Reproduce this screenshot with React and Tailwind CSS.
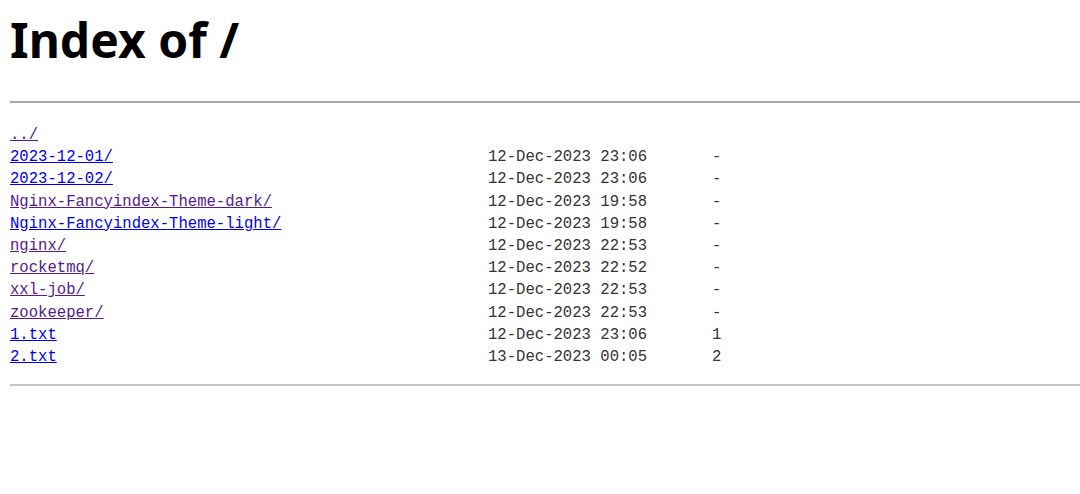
const entries = [
    { name: '../',                             date: '',                  size: '',  visited: true },
    { name: '2023-12-01/',                     date: '12-Dec-2023 23:06', size: '-', visited: false },
    { name: '2023-12-02/',                     date: '12-Dec-2023 23:06', size: '-', visited: false },
    { name: 'Nginx-Fancyindex-Theme-dark/',    date: '12-Dec-2023 19:58', size: '-', visited: true },
    { name: 'Nginx-Fancyindex-Theme-light/',   date: '12-Dec-2023 19:58', size: '-', visited: false },
    { name: 'nginx/',                          date: '12-Dec-2023 22:53', size: '-', visited: true },
    { name: 'rocketmq/',                       date: '12-Dec-2023 22:52', size: '-', visited: true },
    { name: 'xxl-job/',                        date: '12-Dec-2023 22:53', size: '-', visited: true },
    { name: 'zookeeper/',                      date: '12-Dec-2023 22:53', size: '-', visited: true },
    { name: '1.txt',                           date: '12-Dec-2023 23:06', size: '1', visited: false },
    { name: '2.txt',                           date: '13-Dec-2023 00:05', size: '2', visited: false },
];

export default function App() {
    return (
        <div className="w-[1080px] h-[494px] bg-white overflow-hidden">
            <h1 className="pl-[10px] pt-[6px] h-[74px] text-[48px] leading-[68px] font-bold text-black font-['Noto_Sans',sans-serif]">
                Index of /
            </h1>
            <div className="ml-[10px] mt-[27px] h-[2px] bg-[#a8a8a8]" />
            <div className="pl-[10px] pt-[21px] text-[15.6px] leading-[22.2px] font-['Liberation_Mono',monospace] text-[#333]">
                {entries.map(e => (
                    <div key={e.name} className="flex h-[22.2px] whitespace-pre">
                        <a
                            href="#"
                            className={`w-[478px] underline ${e.visited ? 'text-[#551a8b]' : 'text-[#0000ee]'}`}
                        >
                            {e.name}
                        </a>
                        <span className="w-[224px]">{e.date}</span>
                        <span>{e.size}</span>
                    </div>
                ))}
            </div>
            <div className="ml-[10px] mt-[16px] h-[2px] bg-[#c4c4c4]" />
        </div>
    );
}
